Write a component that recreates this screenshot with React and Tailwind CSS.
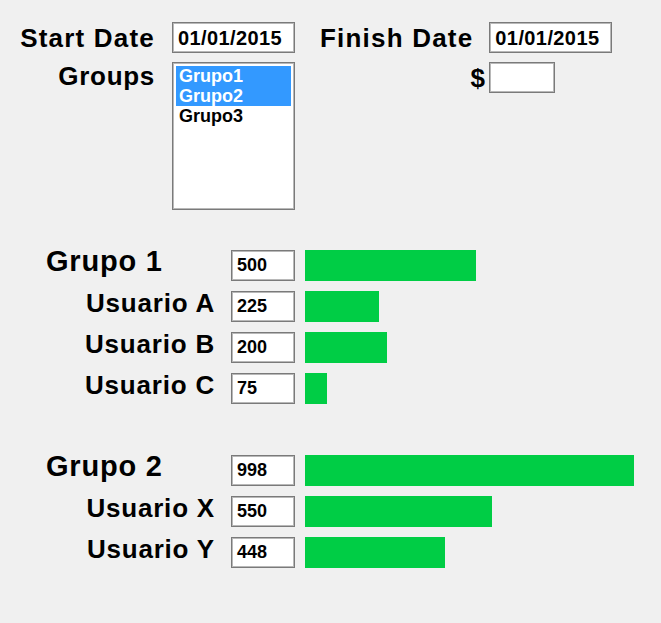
const font = { fontFamily: '"Liberation Sans", Arial, sans-serif' };

function Box({ className = "", children }) {
  return (
    <div
      className={
        "bg-white border border-[#7a7a7a] shadow-[inset_0_0_0_1px_#b8b8b8] flex items-center " +
        className
      }
    >
      {children}
    </div>
  );
}

function Row({ label, value, bar, group }) {
  return (
    <div className="flex items-start h-[31px]">
      {group ? (
        <div className="w-[215px] pl-[46px] text-[29px] font-bold leading-none tracking-[0.8px] mt-[-3px]">
          {label}
        </div>
      ) : (
        <div className="w-[215px] text-right text-[26px] font-bold leading-none tracking-[0.8px] mt-[-1px]">
          {label}
        </div>
      )}
      <Box className="ml-[16px] w-[64px] h-[31px] pl-[5px] text-[18px] font-bold">
        {value}
      </Box>
      <div className="ml-[10px] h-[31px] bg-[#00cd45]" style={{ width: bar }} />
    </div>
  );
}

export default function App() {
  return (
    <div
      className="w-[661px] h-[623px] bg-[#f0f0f0] text-black pt-[22px] overflow-hidden"
      style={font}
    >
      <div className="flex items-center h-[31px]">
        <div className="w-[155px] text-right text-[26px] font-bold leading-none tracking-[1.2px]">
          Start Date
        </div>
        <Box className="ml-[17px] w-[123px] h-[31px] pl-[5px] text-[20px] font-bold tracking-[0.4px]">
          01/01/2015
        </Box>
        <div className="ml-[25px] text-[26px] font-bold leading-none tracking-[1.2px]">
          Finish Date
        </div>
        <Box className="ml-[16px] w-[123px] h-[31px] pl-[5px] text-[20px] font-bold tracking-[0.4px]">
          01/01/2015
        </Box>
      </div>
      <div className="flex items-start mt-[9px]">
        <div className="w-[155px] text-right text-[26px] font-bold leading-none tracking-[0.7px] mt-[1px]">
          Groups
        </div>
        <div className="ml-[17px] w-[123px] h-[148px] bg-white border border-[#7a7a7a] shadow-[inset_0_0_0_1px_#b8b8b8] p-[3px] flex flex-col">
          <div className="bg-[#3399ff] text-white text-[18px] font-bold leading-[20px] pl-[3px]">
            Grupo1
          </div>
          <div className="bg-[#3399ff] text-white text-[18px] font-bold leading-[20px] pl-[3px]">
            Grupo2
          </div>
          <div className="text-[18px] font-bold leading-[20px] pl-[3px]">Grupo3</div>
        </div>
        <div className="flex items-center h-[31px]">
          <div className="w-[190px] text-right text-[26px] font-bold leading-none">$</div>
          <Box className="ml-[4px] w-[66px] h-[31px]" />
        </div>
      </div>

      <div className="mt-[40px] flex flex-col gap-[10px]">
        <Row group label="Grupo 1" value="500" bar={171} />
        <Row label="Usuario A" value="225" bar={74} />
        <Row label="Usuario B" value="200" bar={82} />
        <Row label="Usuario C" value="75" bar={22} />
      </div>

      <div className="mt-[51px] flex flex-col gap-[10px]">
        <Row group label="Grupo 2" value="998" bar={329} />
        <Row label="Usuario X" value="550" bar={187} />
        <Row label="Usuario Y" value="448" bar={140} />
      </div>
    </div>
  );
}
